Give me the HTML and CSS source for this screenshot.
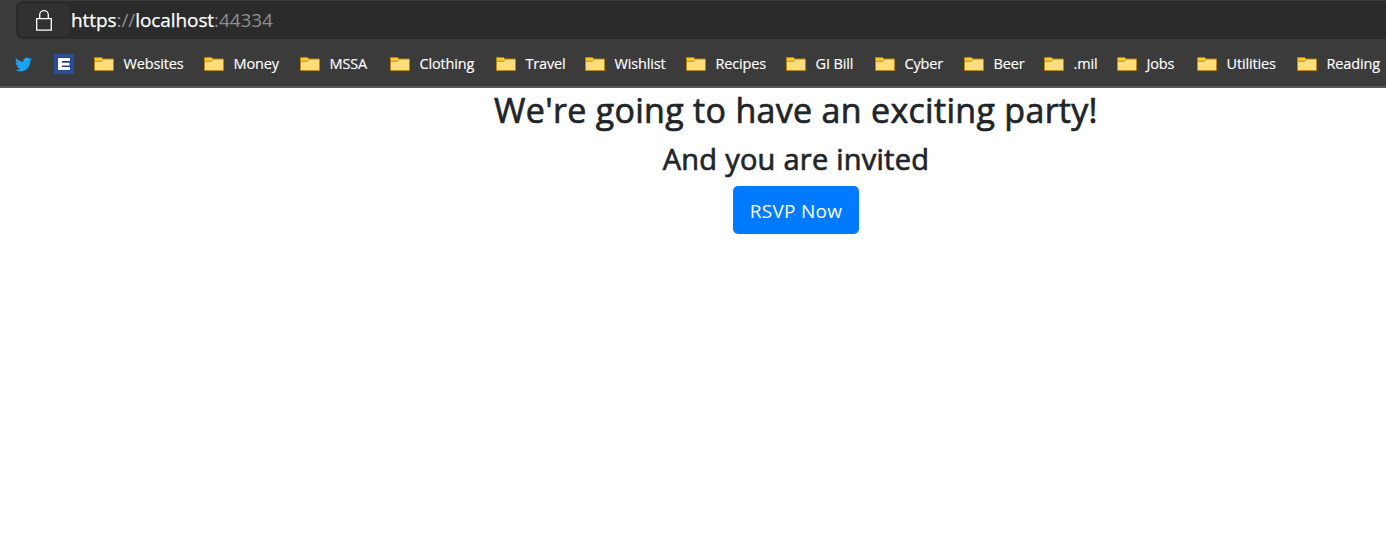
FILE: index.html
```html
<!DOCTYPE html>
<html lang="en">
<head>
<meta charset="utf-8">
<title>Party</title>
<link rel="stylesheet" href="styles.css">
</head>
<body>
<svg class="defs" width="0" height="0" aria-hidden="true">
  <symbol id="folder" viewBox="0 0 20 16">
    <path d="M.5 14.5V1.5H7.5L9 3H19.5V14.5Z" fill="#ffdc7c" stroke="#b8860b"/>
    <path d="M1 2H7.5L8.5 3L7 4.5H1Z" fill="#ffcb2e"/>
    <path d="M1 5.2H7.5L9.2 3.5" fill="none" stroke="#b8860b"/>
  </symbol>
</svg>
<header class="browser">
  <div class="address">
    <div class="lock"><svg width="16" height="21" viewBox="0 0 16 21" fill="none" stroke="#fff" stroke-width="1.3"><path d="M.7 8.7H15.3V20.2H.7Z"/><path d="M3.7 8.5V5A4.3 4.3 0 0 1 12.3 5V8.5"/></svg></div>
    <span class="url">https<i>://</i>localhost<i>:44334</i></span>
  </div>
  <nav class="bookmarks">
    <a class="twitter"><svg width="17" height="17" viewBox="0 0 24 24"><path fill="#1da1f2" d="M23.95 4.57a10 10 0 0 1-2.82.77 4.96 4.96 0 0 0 2.16-2.72c-.95.55-2 .95-3.13 1.18a4.92 4.92 0 0 0-8.38 4.48C7.69 8.1 4.07 6.13 1.64 3.16a4.9 4.9 0 0 0-.67 2.48c0 1.7.87 3.2 2.19 4.09a4.9 4.9 0 0 1-2.23-.61v.06a4.92 4.92 0 0 0 3.95 4.83 5 5 0 0 1-2.21.08 4.94 4.94 0 0 0 4.6 3.42A9.87 9.87 0 0 1 0 19.54a14 14 0 0 0 7.55 2.21c9.05 0 14-7.5 14-13.98 0-.21 0-.42-.02-.63a9.9 9.9 0 0 0 2.42-2.57Z"/></svg></a>
    <a class="square"><svg width="20" height="20" viewBox="0 0 20 20"><path fill="#2b4f96" d="M0 0H20V20H0Z"/><path fill="#24448a" d="M3 3H17V17H3Z"/><path fill="#fff" d="M4 4H16V7H8V8.7H15.5V11.4H8V13H16V16H4Z"/></svg></a>
    <a class="mark"><svg><use href="#folder"/></svg><span>Websites</span></a>
    <a class="mark"><svg><use href="#folder"/></svg><span>Money</span></a>
    <a class="mark"><svg><use href="#folder"/></svg><span>MSSA</span></a>
    <a class="mark"><svg><use href="#folder"/></svg><span>Clothing</span></a>
    <a class="mark"><svg><use href="#folder"/></svg><span>Travel</span></a>
    <a class="mark"><svg><use href="#folder"/></svg><span>Wishlist</span></a>
    <a class="mark"><svg><use href="#folder"/></svg><span>Recipes</span></a>
    <a class="mark"><svg><use href="#folder"/></svg><span>GI Bill</span></a>
    <a class="mark"><svg><use href="#folder"/></svg><span>Cyber</span></a>
    <a class="mark"><svg><use href="#folder"/></svg><span>Beer</span></a>
    <a class="mark"><svg><use href="#folder"/></svg><span>.mil</span></a>
    <a class="mark"><svg><use href="#folder"/></svg><span>Jobs</span></a>
    <a class="mark"><svg><use href="#folder"/></svg><span>Utilities</span></a>
    <a class="mark"><svg><use href="#folder"/></svg><span>Reading</span></a>
  </nav>
</header>
<main class="page">
  <h3 class="title">We're going to have an exciting party!</h3>
  <h4 class="subtitle">And you are invited</h4>
  <a class="button">RSVP Now</a>
</main>
</body>
</html>
```
FILE: styles.css
```css
* { box-sizing: border-box; }
body { margin: 0; height: 545px; overflow: hidden; background: #fff; font-family: "Open Sans", "Noto Sans", sans-serif; }
.defs { display: block; }
.browser { height: 88px; padding-top: 1px; background: #3b3b3b; border-bottom: 2px solid #5c5858; }
.address { display: flex; align-items: center; height: 38px; margin-left: 16px; padding-left: 3px; background: #2b2b2b; border-radius: 6px 0 0 6px; }
.lock { display: flex; align-items: center; justify-content: center; width: 50px; height: 32px; background: #313131; border-radius: 3px; }
.url { margin-left: 2px; color: #fff; font-size: 19px; line-height: 28px; letter-spacing: -0.08px; white-space: nowrap; -webkit-text-stroke: 0.25px; }
.url i { color: #8e8e8e; font-style: normal; -webkit-text-stroke: 0; }
.bookmarks { display: grid; grid-template-columns: 39px 40px 110px 96px 90px 106px 89px 101px 100px 89px 89px 80px 73px 80px 100px 89px; height: 47px; margin-left: 15px; padding-top: 3px; align-items: center; }
.twitter, .square { display: flex; }
.mark { display: flex; align-items: center; gap: 9.5px; color: #fff; font-size: 14.5px; line-height: 20px; letter-spacing: -0.15px; white-space: nowrap; -webkit-text-stroke: 0.15px; }
.mark svg { flex: none; width: 20px; height: 16px; -webkit-text-stroke: 0; }
.page { display: flex; flex-direction: column; align-items: center; padding-left: 206px; }
.title, .subtitle { margin: 0; color: #212529; font-weight: 500; white-space: nowrap; -webkit-text-stroke: 0.7px #212529; }
.title { margin: 1px 0 10px; font-size: 34px; line-height: 42px; letter-spacing: 0.3px; }
.subtitle { margin-bottom: 9px; font-size: 29px; line-height: 36px; letter-spacing: 0.25px; }
.button { width: 126px; height: 48px; border-radius: 5px; background: #007bff; color: #fff; font-size: 19px; line-height: 50px; letter-spacing: 0.3px; text-align: center; white-space: nowrap; }
```
